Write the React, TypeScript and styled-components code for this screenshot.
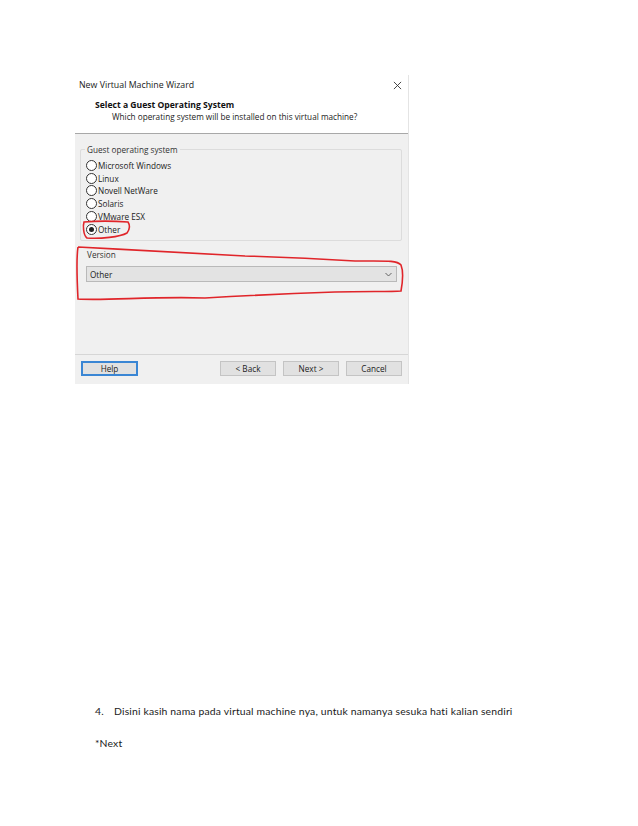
import React from 'react';
import styled, { createGlobalStyle } from 'styled-components';

const GlobalStyle = createGlobalStyle`
  html, body {
    margin: 0;
    padding: 0;
    background: #ffffff;
  }
`;

const Page = styled.div`
  width: 638px;
  height: 826px;
  position: relative;
  padding-top: 75px;
  box-sizing: border-box;
  font-family: "Open Sans", "Noto Sans", sans-serif;
`;

const Dialog = styled.div`
  position: relative;
  margin-left: 75px;
  width: 334px;
  display: flex;
  flex-direction: column;
  border-right: 1px solid #e4e4e4;
  box-sizing: border-box;
`;

const TitleBar = styled.div`
  height: 20px;
  display: flex;
  align-items: center;
  justify-content: space-between;
  padding: 0 6px 0 4px;
  background: #ffffff;
  font-size: 8.8px;
  color: #1a1a1a;
`;

const CloseIcon = styled.svg`
  width: 9px;
  height: 9px;
`;

const Header = styled.div`
  height: 39px;
  background: #ffffff;
  padding: 4px 0 0 20px;
  box-sizing: border-box;
  border-bottom: 1px solid #a8a8a8;
`;

const Heading = styled.div`
  font-size: 8.6px;
  font-weight: 700;
  color: #111;
  line-height: 12px;
`;

const SubHeading = styled.div`
  font-size: 8.2px;
  color: #222;
  line-height: 12px;
  padding-left: 17px;
`;

const Body = styled.div`
  background: #f0f0f0;
  height: 250px;
  display: flex;
  flex-direction: column;
  padding: 15px 6px 0 5px;
  box-sizing: border-box;
`;

const GroupBox = styled.div<{ $height: number }>`
  position: relative;
  border: 1px solid #dcdcdc;
  border-radius: 2px;
  height: ${(p) => p.$height}px;
  box-sizing: border-box;
  padding: 9px 0 0 5px;
`;

const Legend = styled.span`
  position: absolute;
  top: -6px;
  left: 4px;
  padding: 0 2px;
  background: #f0f0f0;
  font-size: 8.2px;
  line-height: 11px;
  color: #333;
`;

const RadioList = styled.div`
  display: flex;
  flex-direction: column;
`;

const RadioRow = styled.div`
  display: flex;
  align-items: center;
  height: 12.8px;
  font-size: 8.2px;
  color: #222;
`;

const RadioCircle = styled.span<{ $checked: boolean }>`
  width: 11px;
  height: 11px;
  border: 1px solid #333;
  border-radius: 50%;
  background: #fff;
  box-sizing: border-box;
  margin-right: 1px;
  display: flex;
  align-items: center;
  justify-content: center;
  &::after {
    content: '';
    display: ${(p) => (p.$checked ? 'block' : 'none')};
    width: 5px;
    height: 5px;
    border-radius: 50%;
    background: #222;
  }
`;

const VersionLabel = styled.div`
  font-size: 8.2px;
  color: #333;
  line-height: 11px;
  padding: 8px 0 6px 7px;
`;

const Select = styled.div`
  margin-left: 6px;
  width: 311px;
  height: 16px;
  box-sizing: border-box;
  background: #e3e3e3;
  border: 1px solid #b9b9b9;
  display: flex;
  align-items: center;
  justify-content: space-between;
  padding: 0 4px 0 3px;
  font-size: 8.2px;
  color: #222;
`;

const Chevron = styled.svg`
  width: 7px;
  height: 5px;
`;

const Spacer = styled.div`
  flex: 1;
`;

const Footer = styled.div`
  border-top: 1px solid #d6d6d6;
  margin: 0 -6px 0 -5px;
  padding: 6px 6px 8px 6px;
  display: flex;
  align-items: center;
`;

const Button = styled.div<{ $focused?: boolean; $gap?: number }>`
  width: ${(p) => (p.$focused ? 57 : 56)}px;
  height: 15px;
  box-sizing: border-box;
  margin-left: ${(p) => p.$gap ?? 0}px;
  background: #e1e1e1;
  border: ${(p) => (p.$focused ? '2px solid #3a86d4' : '1px solid #c4c4c4')};
  display: flex;
  align-items: center;
  justify-content: center;
  font-size: 8.2px;
  color: #222;
`;

const Marks = styled.svg`
  position: absolute;
  left: 0;
  top: 0;
  width: 334px;
  height: 310px;
  pointer-events: none;
`;

const DocText = styled.div`
  position: absolute;
  left: 95px;
  top: 704px;
  font-family: "Lato", "Liberation Sans", sans-serif;
  font-size: 10.4px;
  letter-spacing: 0.17px;
  color: #1a1a1a;
`;

const ListLine = styled.div`
  display: flex;
  line-height: 14px;
`;

const ListNum = styled.span`
  width: 19px;
`;

const NoteLine = styled.div`
  margin-top: 18px;
  line-height: 14px;
`;

const options = ['Microsoft Windows', 'Linux', 'Novell NetWare', 'Solaris', 'VMware ESX', 'Other'];

const App: React.FC = () => {
  return (
    <>
      <GlobalStyle />
      <Page>
        <Dialog>
          <TitleBar>
            <span>New Virtual Machine Wizard</span>
            <CloseIcon viewBox="0 0 10 10">
              <path d="M1 1 L9 9 M9 1 L1 9" stroke="#333" strokeWidth="1" />
            </CloseIcon>
          </TitleBar>
          <Header>
            <Heading>Select a Guest Operating System</Heading>
            <SubHeading>Which operating system will be installed on this virtual machine?</SubHeading>
          </Header>
          <Body>
            <GroupBox $height={92}>
              <Legend>Guest operating system</Legend>
              <RadioList>
                {options.map((o) => (
                  <RadioRow key={o}>
                    <RadioCircle $checked={o === 'Other'} />
                    {o}
                  </RadioRow>
                ))}
              </RadioList>
            </GroupBox>
            <VersionLabel>Version</VersionLabel>
            <Select>
              <span>Other</span>
              <Chevron viewBox="0 0 7 5">
                <path d="M0.5 1 L3.5 4 L6.5 1" stroke="#555" strokeWidth="0.9" fill="none" />
              </Chevron>
            </Select>
            <Spacer />
            <Footer>
              <Button $focused>Help</Button>
              <Button $gap={82}>&lt; Back</Button>
              <Button $gap={7}>Next &gt;</Button>
              <Button $gap={7}>Cancel</Button>
            </Footer>
          </Body>
          <Marks viewBox="0 0 334 310">
            <path
              d="M9 147 C8 150 8 160 12 163 C25 164 45 162 52 158 C55 154 55 150 53 147 C40 146 20 146 9 147 Z"
              stroke="#e0252a"
              strokeWidth="1.6"
              fill="none"
            />
            <path
              d="M3 172 C1 185 2 205 3 224 C30 226 80 221 130 223 C180 220 230 218 260 217 C290 216 315 217 326 216 C328 205 328 195 326 190 C322 185 310 186 280 186 C250 184 210 182 170 181 C120 178 60 175 3 172"
              stroke="#e0252a"
              strokeWidth="1.6"
              fill="none"
            />
          </Marks>
        </Dialog>
        <DocText>
          <ListLine>
            <ListNum>4.</ListNum>
            <span>Disini kasih nama pada virtual machine nya, untuk namanya sesuka hati kalian sendiri</span>
          </ListLine>
          <NoteLine>*Next</NoteLine>
        </DocText>
      </Page>
    </>
  );
};

export default App;
